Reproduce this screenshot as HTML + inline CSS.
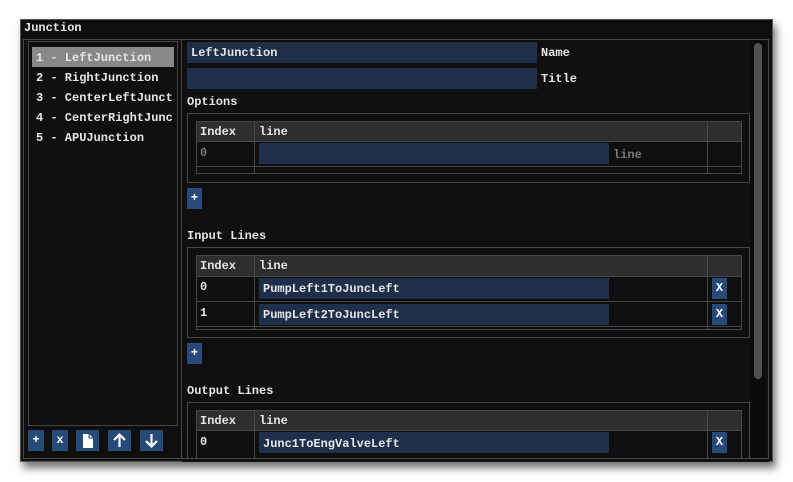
<!DOCTYPE html>
<html><head><style>
*{margin:0;padding:0;box-sizing:border-box}
body{width:793px;height:482px;background:#fff;position:relative;overflow:hidden;font-family:"Liberation Mono",monospace;font-size:12px;color:#e6e6e6;font-weight:bold}
.a{position:absolute}
.win{left:20px;top:19px;width:753px;height:443px;background:#0f0f0f;border:1px solid #555;box-shadow:3px 6px 8px rgba(0,0,0,.55)}
.bd{border:1px solid #474747}
.inp{background:#1f2f4a}
.btn{background:#284a78;color:#fff;text-align:center}
.t{white-space:pre;line-height:14px}
.hdr{background:#2e2e2e}
.dim{color:#777}
</style></head><body>
<div class="a win"></div>
<div class="a t" style="left:24px;top:21px">Junction</div>
<div class="a bd" style="left:23px;top:39px;width:746px;height:420px"></div>
<div class="a bd" style="left:28px;top:41px;width:150px;height:385px"></div>
<div class="a" style="left:181px;top:40px;width:1px;height:418px;background:#474747"></div>
<div class="a" style="left:32px;top:47px;width:142px;height:20px;background:#888"></div>
<div class="a t" style="left:36px;top:51px">1 - LeftJunction</div>
<div class="a t" style="left:36px;top:71px">2 - RightJunction</div>
<div class="a t" style="left:36px;top:91px">3 - CenterLeftJunct</div>
<div class="a t" style="left:36px;top:111px">4 - CenterRightJunc</div>
<div class="a t" style="left:36px;top:131px">5 - APUJunction</div>
<div class="a btn t" style="left:28px;top:430px;width:16px;height:21px;line-height:21px">+</div>
<div class="a btn t" style="left:52px;top:430px;width:16px;height:21px;line-height:21px">x</div>
<div class="a btn" style="left:76px;top:430px;width:23px;height:21px"><svg width="23" height="21"><path d="M7 4h6l4 4v10H7z" fill="#fff"/><path d="M13 4v4h4" fill="none" stroke="#284a78" stroke-width="1"/></svg></div>
<div class="a btn" style="left:108px;top:430px;width:23px;height:21px"><svg width="23" height="21"><path d="M11.5 17V5M6 10l5.5-5.5L17 10" fill="none" stroke="#fff" stroke-width="2.2"/></svg></div>
<div class="a btn" style="left:140px;top:430px;width:23px;height:21px"><svg width="23" height="21"><path d="M11.5 4v12M6 11l5.5 5.5L17 11" fill="none" stroke="#fff" stroke-width="2.2"/></svg></div>

<div class="a inp" style="left:187px;top:42px;width:350px;height:21px"></div>
<div class="a t" style="left:191px;top:46px">LeftJunction</div>
<div class="a t" style="left:541px;top:46px">Name</div>
<div class="a inp" style="left:187px;top:68px;width:350px;height:21px"></div>
<div class="a t" style="left:541px;top:72px">Title</div>
<div class="a t" style="left:187px;top:95px">Options</div>
<div class="a bd" style="left:187px;top:113px;width:563px;height:70px"></div>
<div class="a bd hdr" style="left:196px;top:121px;width:546px;height:21px"></div>
<div class="a bd" style="left:196px;top:141px;width:546px;height:33px"></div>
<div class="a" style="left:196px;top:166px;width:546px;height:1px;background:#474747"></div>
<div class="a" style="left:254px;top:121px;width:1px;height:53px;background:#474747"></div>
<div class="a" style="left:707px;top:121px;width:1px;height:53px;background:#474747"></div>
<div class="a t" style="left:200px;top:125px">Index</div>
<div class="a t" style="left:259px;top:125px">line</div>
<div class="a t dim" style="left:200px;top:146px">0</div>
<div class="a inp" style="left:259px;top:143px;width:350px;height:21px"></div>
<div class="a t dim" style="left:613px;top:148px">line</div>
<div class="a btn t" style="left:187px;top:188px;width:15px;height:21px;line-height:21px">+</div>

<div class="a t" style="left:187px;top:229px">Input Lines</div>
<div class="a bd" style="left:187px;top:247px;width:563px;height:91px"></div>
<div class="a bd hdr" style="left:196px;top:255px;width:546px;height:22px"></div>
<div class="a bd" style="left:196px;top:276px;width:546px;height:54px"></div>
<div class="a" style="left:196px;top:301px;width:546px;height:1px;background:#474747"></div>
<div class="a" style="left:196px;top:326px;width:546px;height:1px;background:#474747"></div>
<div class="a" style="left:254px;top:255px;width:1px;height:75px;background:#474747"></div>
<div class="a" style="left:707px;top:255px;width:1px;height:75px;background:#474747"></div>
<div class="a t" style="left:200px;top:259px">Index</div>
<div class="a t" style="left:259px;top:259px">line</div>
<div class="a t" style="left:200px;top:280px">0</div>
<div class="a inp" style="left:259px;top:278px;width:350px;height:21px"></div>
<div class="a t" style="left:263px;top:282px">PumpLeft1ToJuncLeft</div>
<div class="a btn t" style="left:712px;top:278px;width:15px;height:21px;line-height:21px">X</div>
<div class="a t" style="left:200px;top:306px">1</div>
<div class="a inp" style="left:259px;top:304px;width:350px;height:21px"></div>
<div class="a t" style="left:263px;top:308px">PumpLeft2ToJuncLeft</div>
<div class="a btn t" style="left:712px;top:304px;width:15px;height:21px;line-height:21px">X</div>
<div class="a btn t" style="left:187px;top:343px;width:15px;height:21px;line-height:21px">+</div>

<div class="a t" style="left:187px;top:384px">Output Lines</div>
<div class="a bd" style="left:187px;top:402px;width:563px;height:60px;border-bottom:none"></div>
<div class="a bd hdr" style="left:196px;top:410px;width:546px;height:21px"></div>
<div class="a" style="left:196px;top:430px;width:1px;height:28px;background:#474747"></div>
<div class="a" style="left:741px;top:430px;width:1px;height:28px;background:#474747"></div>
<div class="a" style="left:254px;top:410px;width:1px;height:48px;background:#474747"></div>
<div class="a" style="left:707px;top:410px;width:1px;height:48px;background:#474747"></div>
<div class="a t" style="left:200px;top:414px">Index</div>
<div class="a t" style="left:259px;top:414px">line</div>
<div class="a t" style="left:200px;top:435px">0</div>
<div class="a inp" style="left:259px;top:432px;width:350px;height:21px"></div>
<div class="a t" style="left:263px;top:437px">Junc1ToEngValveLeft</div>
<div class="a btn t" style="left:712px;top:432px;width:15px;height:21px;line-height:21px">X</div>
<div class="a" style="left:182px;top:458px;width:587px;height:4px;background:#0f0f0f"></div>
<div class="a" style="left:23px;top:458px;width:746px;height:1px;background:#474747"></div>

<div class="a" style="left:751px;top:40px;width:14px;height:418px;background:#0a0a0a"></div>
<div class="a" style="left:754px;top:43px;width:8px;height:336px;background:#505050;border-radius:4px"></div>
</body></html>
